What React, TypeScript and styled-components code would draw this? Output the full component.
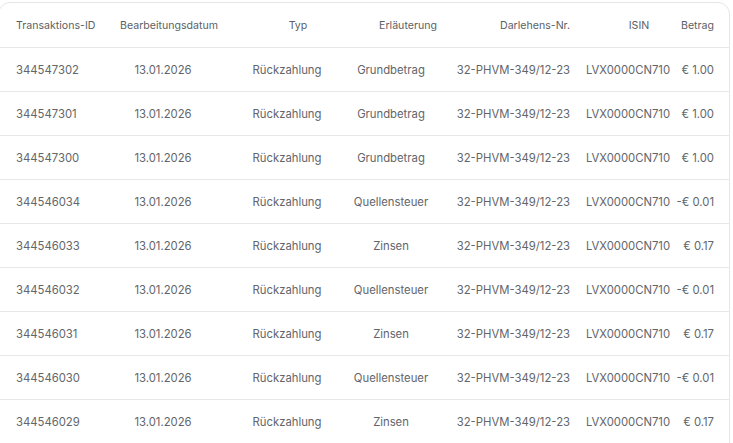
import React from "react";
import styled, { createGlobalStyle } from "styled-components";

const Global = createGlobalStyle`
  html, body { margin: 0; padding: 0; background: #ffffff; }
  body { font-family: Inter, "Noto Sans", Arial, sans-serif; overflow: hidden; }
`;

const Page = styled.div`
  padding-top: 2px;
  width: 733px;
`;

const Card = styled.div`
  width: 732px;
  margin-left: -2px;
  padding-bottom: 16px;
  box-sizing: border-box;
  border: 1px solid #e6e6e6;
  border-radius: 12px;
  background: #fff;
  overflow: hidden;
`;

const COLS = "111px 106px 142px 66px 153px 102px 50px";

const Row = styled.div<{ $head?: boolean }>`
  display: grid;
  grid-template-columns: ${COLS};
  height: ${(p) => (p.$head ? 44 : 43)}px;
  border-bottom: 1px solid #e8e8e8;
  align-items: center;
`;

type Align = "left" | "center" | "right";

const Cell = styled.div<{ $align: Align; $pl?: number; $pr?: number; $head?: boolean }>`
  display: flex;
  min-width: 0;
  white-space: nowrap;
  justify-content: ${(p) =>
    p.$align === "left" ? "flex-start" : p.$align === "right" ? "flex-end" : "center"};
  padding-left: ${(p) => p.$pl ?? 0}px;
  padding-right: ${(p) => p.$pr ?? 0}px;
  font-size: ${(p) => (p.$head ? 10.6 : 11.3)}px;
  color: ${(p) => (p.$head ? "#5c5f66" : "#62656a")};
  font-weight: 400;
`;

type Col = { align: Align; pl?: number; pr?: number; hpl?: number; hpr?: number };

const cols: Col[] = [
  { align: "left", pl: 17, hpl: 17 },
  { align: "center", hpl: 12 },
  { align: "center", hpl: 22 },
  { align: "center", hpl: 34 },
  { align: "right", pr: 7, hpr: 7 },
  { align: "center", hpl: 22 },
  { align: "right", pr: 15, hpr: 15 },
];

const headers = [
  "Transaktions-ID",
  "Bearbeitungsdatum",
  "Typ",
  "Erläuterung",
  "Darlehens-Nr.",
  "ISIN",
  "Betrag",
];

const data: [string, string, string][] = [
  ["344547302", "Grundbetrag", "€ 1.00"],
  ["344547301", "Grundbetrag", "€ 1.00"],
  ["344547300", "Grundbetrag", "€ 1.00"],
  ["344546034", "Quellensteuer", "-€ 0.01"],
  ["344546033", "Zinsen", "€ 0.17"],
  ["344546032", "Quellensteuer", "-€ 0.01"],
  ["344546031", "Zinsen", "€ 0.17"],
  ["344546030", "Quellensteuer", "-€ 0.01"],
  ["344546029", "Zinsen", "€ 0.17"],
];

export default function App() {
  return (
    <Page>
      <Global />
      <Card>
        <Row $head>
          {headers.map((h, i) => (
            <Cell key={h} $head $align={cols[i].align} $pl={cols[i].hpl} $pr={cols[i].hpr}>
              {h}
            </Cell>
          ))}
        </Row>
        {data.map(([id, erl, amt]) => {
          const vals = [id, "13.01.2026", "Rückzahlung", erl, "32-PHVM-349/12-23", "LVX0000CN710", amt];
          return (
            <Row key={id}>
              {vals.map((v, i) => (
                <Cell key={i} $align={cols[i].align} $pl={cols[i].pl} $pr={cols[i].pr}>
                  {v}
                </Cell>
              ))}
            </Row>
          );
        })}
      </Card>
    </Page>
  );
}
